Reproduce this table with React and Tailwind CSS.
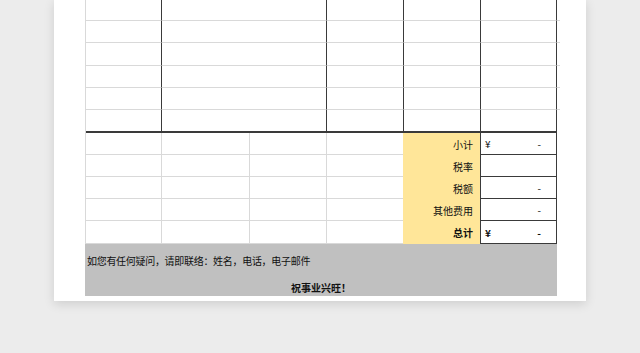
import React from "react";

const font = { fontFamily: '"Noto Sans CJK SC", "Noto Sans", sans-serif' };

function TopRow({ h, last }) {
  const b = last ? "border-b-2 border-b-[#3a3a3a]" : "border-b border-b-[#d9d9d9]";
  return (
    <div className="flex" style={{ height: h }}>
      <div className={`w-[76px] border-r border-r-[#3a3a3a] ${b}`} />
      <div className={`w-[165px] border-r border-r-[#3a3a3a] ${b}`} />
      <div className={`w-[77px] border-r border-r-[#3a3a3a] ${b}`} />
      <div className={`w-[77px] border-r border-r-[#3a3a3a] ${b}`} />
      <div className={`w-[76px] border-r border-r-[#3a3a3a] ${b}`} />
      <div className={`w-[3px] ${last ? "" : "border-b border-b-[#d9d9d9]"}`} />
    </div>
  );
}

function LowRow({ h, label, yen, dash, bold }) {
  return (
    <div className="flex" style={{ height: h }}>
      <div className="w-[76px] border-r border-b border-[#d9d9d9]" />
      <div className="w-[88px] border-r border-b border-[#d9d9d9]" />
      <div className="w-[77px] border-r border-b border-[#d9d9d9]" />
      <div className="w-[76px] border-b border-[#d9d9d9]" />
      <div
        className={`w-[77px] bg-[#ffe699] flex items-center justify-end pr-[7px] text-[10px] text-[#111] ${bold ? "font-bold" : ""}`}
      >
        {label}
      </div>
      <div
        className={`w-[77px] border-x border-b border-[#3a3a3a] bg-white flex items-center justify-between pl-[4px] pr-[15px] text-[10px] text-[#111] ${bold ? "font-bold" : ""}`}
      >
        <span>{yen ? "¥" : ""}</span>
        <span>{dash ? "-" : ""}</span>
      </div>
    </div>
  );
}

export default function App() {
  return (
    <div className="w-[640px] h-[353px] bg-[#ececec] overflow-hidden" style={font}>
      <div className="ml-[54px] w-[532px] bg-white pl-[31px] pb-[5px] shadow-[0_3px_10px_rgba(0,0,0,0.13)]">
        <div className="border-l border-[#d9d9d9] w-[475px]">
          <TopRow h={21} />
          <TopRow h={22} />
          <TopRow h={23} />
          <TopRow h={22} />
          <TopRow h={22} />
          <TopRow h={23} last />
        </div>
        <div className="border-l border-[#d9d9d9] w-[472px]">
          <LowRow h={22} label="小计" yen dash />
          <LowRow h={22} label="税率" />
          <LowRow h={22} label="税额" dash />
          <LowRow h={22} label="其他费用" dash />
          <LowRow h={23} label="总计" yen dash bold />
        </div>
        <div className="w-[472px] h-[52px] bg-[#c0c0c0] text-[10px] text-[#111]">
          <div className="h-[32px] flex items-center pl-[2px] tracking-[-0.3px]">
            如您有任何疑问，请即联络：姓名，电话，电子邮件
          </div>
          <div className="h-[20px] pt-[5px] leading-[14px] text-center font-bold">
            祝事业兴旺！
          </div>
        </div>
      </div>
    </div>
  );
}
